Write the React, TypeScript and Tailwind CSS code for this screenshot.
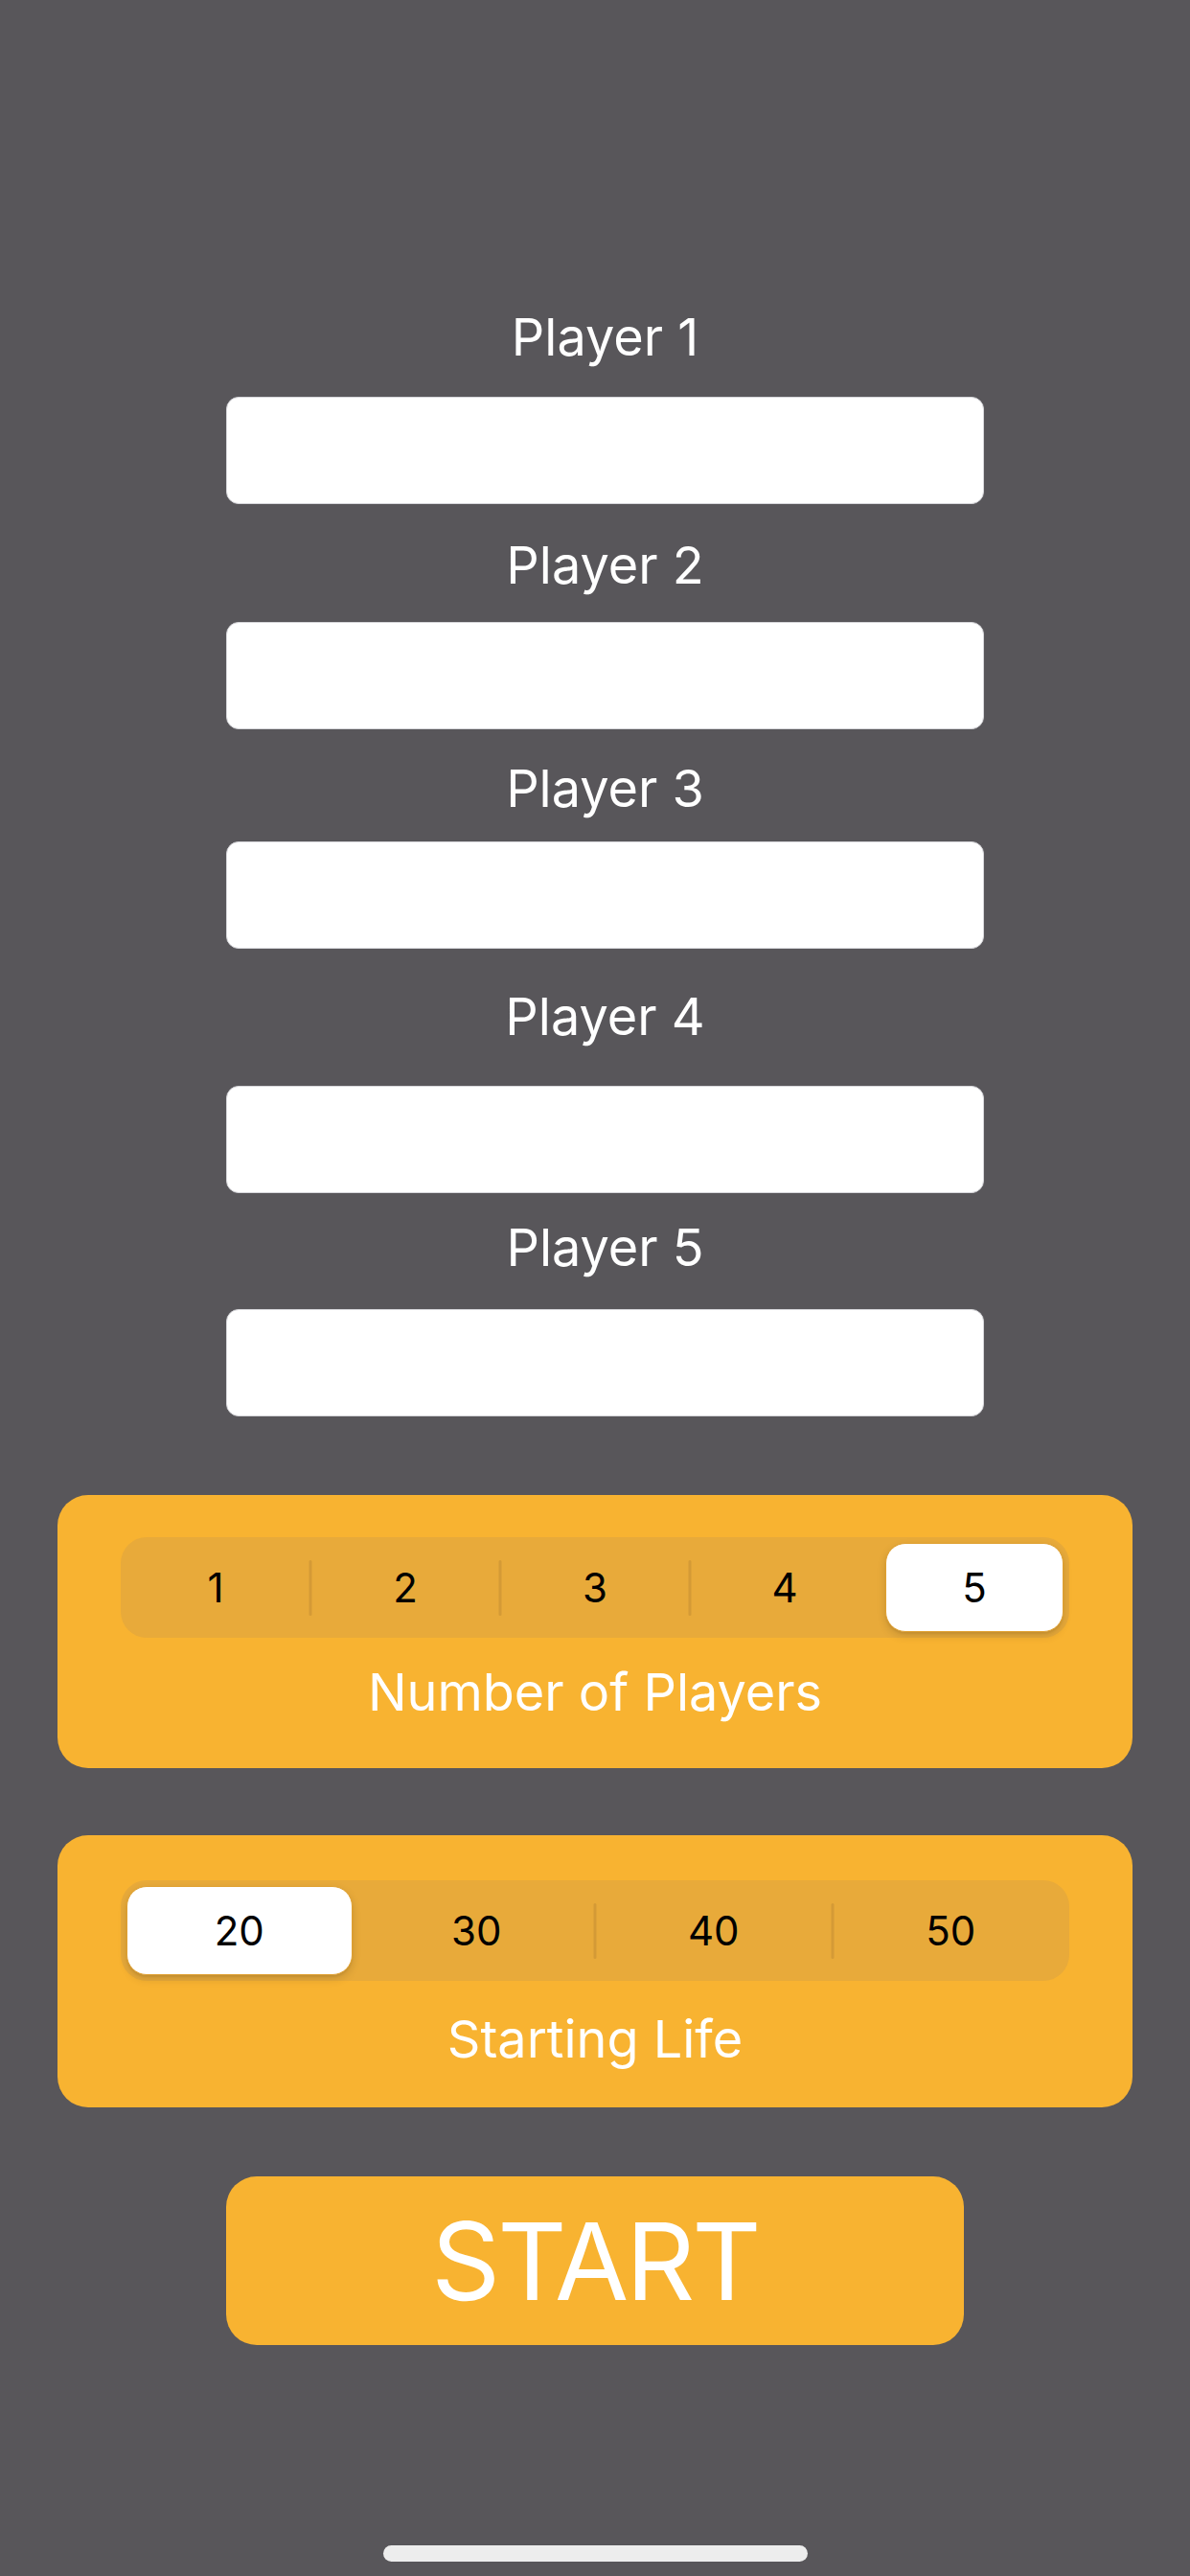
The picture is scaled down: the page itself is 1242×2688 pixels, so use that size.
import { useState } from "react";

const players = [
  { label: "Player 1", labelMt: "mt-[324px]", fieldMt: "mt-[34px]" },
  { label: "Player 2", labelMt: "mt-[36px]", fieldMt: "mt-[31px]" },
  { label: "Player 3", labelMt: "mt-[34px]", fieldMt: "mt-[27px]" },
  { label: "Player 4", labelMt: "mt-[43px]", fieldMt: "mt-[44px]" },
  { label: "Player 5", labelMt: "mt-[29px]", fieldMt: "mt-[36px]" },
];

const Segmented = ({
  options,
  value,
  onChange,
}: {
  options: string[];
  value: number;
  onChange: (i: number) => void;
}) => {
  return (
    <div className="mx-[66px] flex h-[105px] rounded-[27px] bg-[#e8aa3a] py-[6px]">
      {options.map((opt, i) => {
        const selected = i === value;
        // divider sits between two unselected segments
        const showDivider = i > 0 && !selected && i - 1 !== value;
        return (
          <div key={opt} className="relative flex flex-1 items-center px-[6px]">
            {i > 0 && (
              <div
                className={`absolute left-0 top-1/2 h-[58px] w-[3px] -translate-x-1/2 -translate-y-1/2 rounded-full bg-[#d49a36] ${
                  showDivider ? "opacity-100" : "opacity-0"
                }`}
              />
            )}
            <button
              onClick={() => onChange(i)}
              className={`flex h-full w-full items-center justify-center rounded-[21px] text-[42px] text-black ${
                selected
                  ? "border border-[#e0a030] bg-white shadow-[0_4px_10px_rgba(0,0,0,0.14),0_2px_2px_rgba(0,0,0,0.05)]"
                  : ""
              }`}
            >
              {opt}
            </button>
          </div>
        );
      })}
    </div>
  );
};

export default function App() {
  const [count, setCount] = useState(4);
  const [life, setLife] = useState(0);

  return (
    <div className="relative min-h-[2688px] w-[1242px] bg-[#58565a] font-[Inter,sans-serif]">
      {/* Player name fields */}
      <div className="ml-[236px] flex w-[791px] flex-col">
        {players.map((p) => (
          <div key={p.label} className="flex flex-col">
            <div className={`${p.labelMt} h-[56px] text-center text-[54px] leading-[56px] text-white`}>
              {p.label}
            </div>
            <input
              className={`${p.fieldMt} h-[112px] rounded-[13px] border border-[#d6d6da] bg-white px-6 text-[48px] outline-none`}
            />
          </div>
        ))}
      </div>

      {/* Number of players */}
      <div className="mx-[60px] mt-[82px] h-[285px] rounded-[32px] bg-[#f8b331] pt-[44px]">
        <Segmented options={["1", "2", "3", "4", "5"]} value={count} onChange={setCount} />
        <div className="mt-[29px] h-[56px] text-center text-[54px] leading-[56px] text-white">
          Number of Players
        </div>
      </div>

      {/* Starting life */}
      <div className="mx-[60px] mt-[70px] h-[284px] rounded-[32px] bg-[#f8b331] pt-[47px]">
        <Segmented options={["20", "30", "40", "50"]} value={life} onChange={setLife} />
        <div className="mt-[33px] h-[56px] text-center text-[54px] leading-[56px] text-white">
          Starting Life
        </div>
      </div>

      <button className="ml-[236px] mt-[72px] flex h-[176px] w-[770px] items-center justify-center rounded-[32px] bg-[#f8b331] text-[112px] leading-none tracking-[-3px] text-white">
        START
      </button>

      {/* home indicator */}
      <div className="absolute bottom-[15px] left-[400px] h-[17px] w-[443px] rounded-full bg-[#ededed]" />
    </div>
  );
}
